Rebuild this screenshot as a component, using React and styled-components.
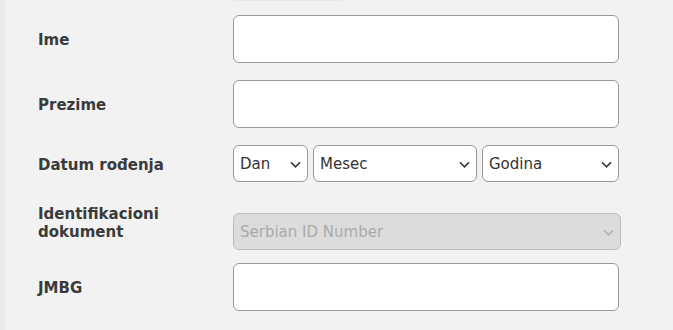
import React from "react";
import styled, { createGlobalStyle } from "styled-components";

const Global = createGlobalStyle`
  html, body { margin: 0; padding: 0; background: #f2f2f2; }
  body { font-family: "DejaVu Sans", Verdana, sans-serif; }
`;

const Page = styled.div`
  min-height: 330px;
  border-left: 5px solid #ebebeb;
  box-sizing: border-box;
  background: #f2f2f2;
`;

const TopTab = styled.div`
  height: 1px;
  width: 107px;
  margin-left: 229px;
  background: #e8e8e8;
`;

const Form = styled.div`
  padding: 14px 0 0 33px;
  display: flex;
  flex-direction: column;
`;

const Row = styled.div`
  display: flex;
  align-items: ${(p) => (p.$top ? "flex-start" : "center")};
  margin-bottom: ${(p) => p.$gap}px;
`;

const Label = styled.label`
  width: 195px;
  flex: none;
  font-size: 15px;
  line-height: 18px;
  font-weight: bold;
  color: #3a3a3a;
  padding: ${(p) => (p.$top ? "0" : "2px")} 30px 0 0;
  box-sizing: border-box;
`;

const Input = styled.input`
  box-sizing: border-box;
  width: 386px;
  height: 48px;
  border: 1px solid #999;
  border-radius: 6px;
  background: #fff;
  font: 15px "DejaVu Sans", sans-serif;
  padding: 0 8px;
  margin: 0;
  outline: none;
`;

const DateGroup = styled.div`
  display: flex;
  gap: 5px;
  width: 386px;
`;

const SelectWrap = styled.div`
  position: relative;
  flex: none;
  width: ${(p) => p.$w}px;
  margin-top: ${(p) => p.$mt || 0}px;
`;

const Select = styled.select`
  appearance: none;
  -webkit-appearance: none;
  box-sizing: border-box;
  width: 100%;
  height: 37px;
  margin: 0;
  border: 1px solid ${(p) => (p.disabled ? "#bcbcbc" : "#999")};
  border-radius: 6px;
  background: ${(p) => (p.disabled ? "#dcdcdc" : "#fff")};
  color: ${(p) => (p.disabled ? "#aaa" : "#333")};
  font: 15px "DejaVu Sans", sans-serif;
  padding: 1px 24px 0 6px;
  outline: none;
  opacity: 1;
`;

const Chevron = styled.svg`
  position: absolute;
  right: 7px;
  top: 50%;
  width: 11px;
  height: 8px;
  margin-top: -3px;
  pointer-events: none;
`;

function Arrow({ disabled }) {
  return (
    <Chevron viewBox="0 0 11 8">
      <path
        d="M1 1.3 L5.5 5.8 L10 1.3"
        fill="none"
        stroke={disabled ? "#b0b0b0" : "#333"}
        strokeWidth="1.6"
      />
    </Chevron>
  );
}

function Dropdown({ width, label, disabled, mt }) {
  return (
    <SelectWrap $w={width} $mt={mt}>
      <Select disabled={disabled} defaultValue="">
        <option value="">{label}</option>
      </Select>
      <Arrow disabled={disabled} />
    </SelectWrap>
  );
}

export default function App() {
  return (
    <>
      <Global />
      <Page>
        <TopTab />
        <Form>
          <Row $gap={17}>
            <Label>Ime</Label>
            <Input type="text" />
          </Row>
          <Row $gap={17}>
            <Label>Prezime</Label>
            <Input type="text" />
          </Row>
          <Row $gap={23}>
            <Label>Datum rođenja</Label>
            <DateGroup>
              <Dropdown width={75} label="Dan" />
              <Dropdown width={164} label="Mesec" />
              <Dropdown width={137} label="Godina" />
            </DateGroup>
          </Row>
          <Row $gap={13} $top>
            <Label $top>Identifikacioni dokument</Label>
            <Dropdown width={388} label="Serbian ID Number" disabled mt={8} />
          </Row>
          <Row $gap={0}>
            <Label>JMBG</Label>
            <Input type="text" />
          </Row>
        </Form>
      </Page>
    </>
  );
}
